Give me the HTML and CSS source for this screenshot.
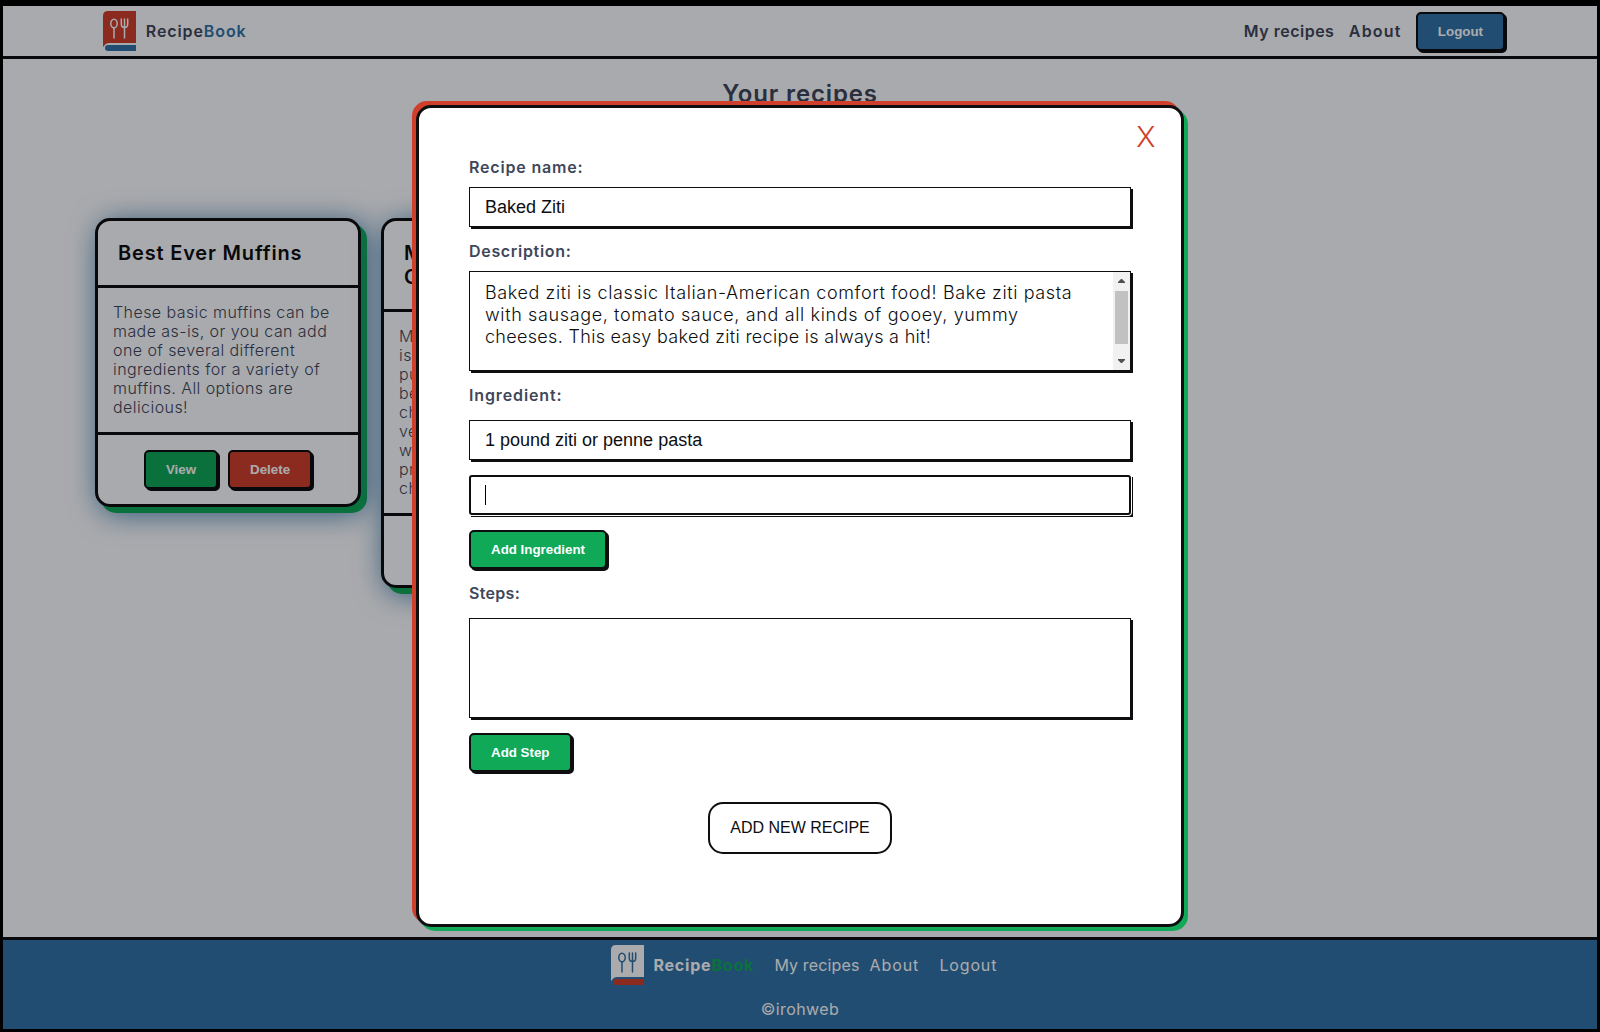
FILE: index.html
```html
<!DOCTYPE html>
<html lang="en">
<head>
<meta charset="utf-8">
<title>RecipeBook</title>
<link rel="stylesheet" href="styles.css">
</head>
<body>
<div class="app">
  <header class="header">
    <a class="brand">
      <svg class="logo" viewBox="0 0 33 40">
        <path fill="#cf3f2c" d="M5 0H33V32H6.500Q2 32 .6 36Q0 35.500 0 34V5Q0 0 5 0Z"/>
        <path fill="#3173a6" d="M5 34H33V40H5Q2 40 2 37T5 34Z"/>
        <g class="cutlery" stroke="#fdfeff"><ellipse cx="11" cy="12.500" rx="3.200" ry="4.300"/><path d="M11 17V27M21.500 8V27M18.300 8V13Q18.300 16.500 21.500 16.500T24.700 13V8"/></g>
      </svg>
      <span class="brand-name">Recipe<span class="blue">Book</span></span>
    </a>
    <nav class="nav">
      <a class="nav-recipes">My recipes</a>
      <a class="nav-about">About</a>
      <button class="btn btn-blue">Logout</button>
    </nav>
  </header>

  <main class="main">
    <h1 class="title">Your recipes</h1>
    <div class="cards">
      <article class="card">
        <h2 class="card-title">Best Ever Muffins</h2>
        <p class="card-text">These basic muffins can be<br>made as-is, or you can add<br>one of several different<br>ingredients for a variety of<br>muffins. All options are<br>delicious!</p>
        <div class="card-actions">
          <button class="btn btn-green">View</button>
          <button class="btn btn-red">Delete</button>
        </div>
      </article>
      <article class="card">
        <h2 class="card-title">M<br>C</h2>
        <p class="card-text">M<br>is<br>pu<br>be<br>ch<br>ve<br>w<br>pr<br>ch</p>
        <div class="card-actions card-actions-tall"></div>
      </article>
    </div>
  </main>

  <footer class="footer">
    <div class="footer-row">
      <svg class="logo" viewBox="0 0 33 40">
        <path fill="#fff" d="M5 0H33V32H6.500Q2 32 .6 36Q0 35.500 0 34V5Q0 0 5 0Z"/>
        <path fill="#cf3f2c" d="M5 34H33V40H5Q2 40 2 37T5 34Z"/>
        <g class="cutlery" stroke="#3173a6"><ellipse cx="11" cy="12.500" rx="3.200" ry="4.300"/><path d="M11 17V27M21.500 8V27M18.300 8V13Q18.300 16.500 21.500 16.500T24.700 13V8"/></g>
      </svg>
      <span class="footer-brand">Recipe<span class="green">Book</span></span>
      <a class="footer-recipes">My recipes</a>
      <a class="footer-about">About</a>
      <a class="footer-logout">Logout</a>
    </div>
    <div class="copyright">©irohweb</div>
  </footer>
</div>

<div class="overlay">
  <form class="modal">
    <span class="close">X</span>
    <label class="label label-name">Recipe name:</label>
    <div class="field">Baked Ziti</div>
    <label class="label label-desc">Description:</label>
    <div class="area">
      <div class="area-text"><span class="l1">Baked ziti is classic Italian-American comfort food! Bake ziti pasta</span><span class="l2">with sausage, tomato sauce, and all kinds of gooey, yummy</span><span class="l3">cheeses. This easy baked ziti recipe is always a hit!</span></div>
      <div class="scrollbar">
        <svg class="arrow" viewBox="0 0 7 4"><path d="M3 0H4L7 3V4H0V3Z"/></svg>
        <div class="thumb"></div>
        <svg class="arrow" viewBox="0 0 7 4"><path d="M0 0H7V1L4 4H3L0 1Z"/></svg>
      </div>
    </div>
    <label class="label label-ingredient">Ingredient:</label>
    <div class="field">1 pound ziti or penne pasta</div>
    <div class="focus-shadow"><div class="field-focus"><span class="caret"></span></div></div>
    <button type="button" class="btn btn-green">Add Ingredient</button>
    <label class="label label-steps">Steps:</label>
    <div class="area"></div>
    <button type="button" class="btn btn-green btn-step">Add Step</button>
    <button type="button" class="submit">ADD NEW RECIPE</button>
  </form>
</div>
</body>
</html>
```
FILE: styles.css
```css
* { box-sizing: border-box; margin: 0; padding: 0; }

body {
  height: 1032px;
  border: solid #000;
  border-width: 6px 3px 3px;
  overflow: hidden;
  font: 16px/20px Inter, "Open Sans", sans-serif;
  color: #3f475a;
  background: #fdfeff;
}

.app { height: 1023px; display: flex; flex-direction: column; background: #fdfeff; }

.header {
  height: 53px;
  flex: none;
  border-bottom: 3px solid #0e0e10;
  padding: 0 92px 0 100.4px;
  display: flex;
  justify-content: space-between;
  align-items: center;
  font-weight: 600;
}
.brand { display: flex; align-items: center; gap: 9.4px; }
.logo { width: 33px; height: 40px; display: block; flex: none; }
.cutlery { fill: none; stroke-width: 1.5; stroke-linecap: round; }
.brand-name { letter-spacing: .9px; }
.blue { color: #3173a6; }
.green { color: #0fa958; }

.nav { display: flex; align-items: center; }
.nav-recipes { width: 105px; letter-spacing: .5px; }
.nav-about { width: 67px; letter-spacing: 1.2px; }

.btn {
  display: block;
  height: 39px;
  padding: 0 20px;
  border: 2px solid #0e0e10;
  border-radius: 5px;
  box-shadow: 2px 2px 0 #0e0e10;
  font: bold 13.333px "Liberation Sans", Arial, sans-serif;
  color: #fff;
}
.btn-blue { background: #3173a6; }
.btn-green { background: #0fa958; }
.btn-red { background: #cf3f2c; }

.main { flex: 1; padding-top: 20px; }
.title { text-align: center; font-size: 24px; line-height: 29px; font-weight: 600; letter-spacing: .85px; }
.cards { display: flex; align-items: flex-start; gap: 20px; padding: 110px 0 0 92px; }
.card {
  width: 266px;
  border: 3px solid #0e0e10;
  border-radius: 15px;
  background: #fdfeff;
  box-shadow: 6px 6px 0 #0fa958, 5px 5px 30px #3173a6;
}
.card-title { padding: 20px; border-bottom: 3px solid #0e0e10; font-size: 20px; line-height: 24px; font-weight: 600; letter-spacing: .82px; color: #0e0e10; white-space: nowrap; }
.card-text { padding: 15px; border-bottom: 3px solid #0e0e10; font-weight: 300; line-height: 19px; letter-spacing: .43px; white-space: nowrap; }
.card-actions { display: flex; justify-content: center; gap: 10px; padding: 15px; }
.card-actions-tall { height: 69px; }

.footer { height: 92px; flex: none; border-top: 3px solid #0e0e10; background: #3173a6; color: #fff; padding-top: 5px; }
.footer-row { display: flex; align-items: center; padding-left: 608.4px; }
.footer-brand { margin-left: 9px; width: 121px; font-weight: 700; letter-spacing: .81px; }
.footer-recipes { width: 95px; letter-spacing: .14px; }
.footer-about { width: 70px; letter-spacing: .95px; }
.footer-logout { letter-spacing: .85px; }
.copyright { margin-top: 14px; text-align: center; letter-spacing: .39px; }

.overlay {
  position: absolute;
  inset: 6px 3px 3px;
  background: rgba(0, 0, 5, .33);
  display: flex;
  justify-content: center;
  align-items: flex-start;
  padding-top: 99px;
}
.modal {
  position: relative;
  width: 768px;
  height: 822px;
  padding: 49px 50px 0;
  border: 3px solid #0e0e10;
  border-radius: 15px;
  background: #fff;
  box-shadow: 4px 4px 0 #0fa958, -4px -4px 0 #cf3f2c;
}
.close { position: absolute; top: 11px; right: 25.5px; font-size: 29px; line-height: 35px; font-weight: 300; color: #cf3f2c; }

.label { display: block; font-weight: 600; }
.label-name { margin-bottom: 10px; letter-spacing: .82px; }
.label-desc { margin: 14px 0 10px; letter-spacing: .68px; }
.label-ingredient { margin: 14px 0 15px; letter-spacing: .88px; }
.label-steps { margin: 14px 0 15px; letter-spacing: .3px; }

.field {
  height: 40px;
  padding: 0 15px;
  border: 1px solid #0e0e10;
  box-shadow: 2px 2px 0 #0e0e10;
  font: 18px/38px "Liberation Sans", Arial, sans-serif;
  color: #0e0e10;
}
.focus-shadow { height: 40px; margin: 15px 0; box-shadow: 2px 2px 0 #0e0e10; }
.field-focus {
  height: 40px;
  padding: 8px 14px;
  border: 2px solid #0e0e10;
  border-radius: 3px;
  background: #fff;
  box-shadow: 0 0 0 1px #fff;
}
.caret { display: block; width: 1px; height: 20px; background: #000; }

.area { height: 100px; display: flex; justify-content: space-between; border: 1px solid #0e0e10; box-shadow: 2px 2px 0 #0e0e10; }
.area-text { padding: 9.5px 0 0 15px; font-size: 18px; line-height: 22px; font-weight: 300; color: #0e0e10; white-space: nowrap; }
.area-text span { display: block; }
.l1 { letter-spacing: .6px; }
.l2 { letter-spacing: .63px; }
.l3 { letter-spacing: .31px; }
.scrollbar { width: 17px; display: flex; flex-direction: column; align-items: center; background: #f1f1f1; padding: 7px 0; }
.arrow { width: 7px; height: 4px; fill: #505050; display: block; }
.thumb { width: 13px; height: 53px; margin: 8px 0 15px; background: #c1c1c1; }

.btn-step { margin-top: 15px; }
.submit {
  display: block;
  width: 184px;
  height: 52px;
  margin: 30px auto 0;
  border: 2px solid #0e0e10;
  border-radius: 15px;
  background: #fff;
  font: 16px "Liberation Sans", Arial, sans-serif;
  color: #0e0e10;
  white-space: nowrap;
}
```
